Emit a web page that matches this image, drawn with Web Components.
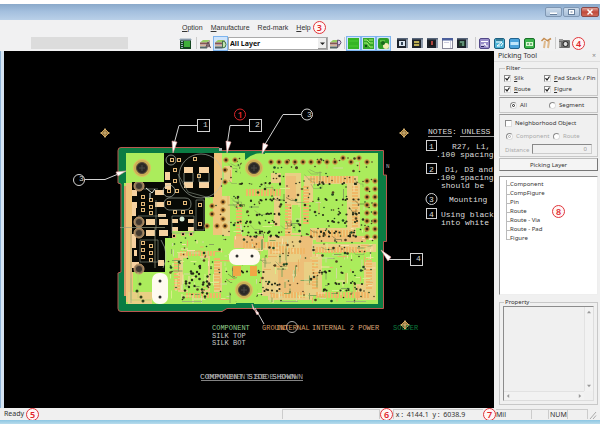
<!DOCTYPE html>
<html lang="en">
<head>
<meta charset="utf-8">
<title>PCB Viewer</title>
<style>
  html, body { height: 100%; }
  body { margin: 0; background: #fff; color: #333; font: 7px/10px "Noto Sans", "Liberation Sans", sans-serif; }
</style>
</head>
<body>
<app-window></app-window>
<script>
const define = (name, html, setup) => {
  const tpl = document.createElement('template');
  tpl.innerHTML = '<style>:host,*{box-sizing:border-box}</style>' + html;
  customElements.define(name, class extends HTMLElement {
    constructor() {
      super();
      this.attachShadow({ mode: 'open' }).append(tpl.content.cloneNode(true));
    }
    connectedCallback() { if (setup) setup(this, this.shadowRoot); }
  });
};

/* ---------- small parts ---------- */
define('num-badge', `<style>
  :host{display:inline-flex;flex:none;align-items:center;justify-content:center;width:13px;height:13px;border:1px solid #e0353a;border-radius:50%;color:#e0252b;font-size:9px;line-height:11px;font-weight:600;background:#fff6f6}
</style><slot></slot>`);

const chip = (bg, inner) => `<rect x="1" y="1" width="11" height="10" fill="#1c222b"/><rect x="10" y="1" width="2" height="10" fill="#8c98a8"/><rect x="1" y="1" width="11" height="1.5" fill="#59677c"/><rect x="3" y="4" width="6" height="5" fill="${bg}"/>${inner}`;
const tile = (a, b, inner) => `<rect x="1.5" y="1.5" width="10" height="10" rx="1.5" fill="${a}" stroke="${b}"/>${inner}`;
const stack = (extra) => `<path d="M1 5.5 4 3h7L8 5.5z" fill="#9c6"/><path d="M1 5.5h7v2H1z" fill="#855"/><path d="M1 8h7v1.300H1z" fill="#d9b79a"/><path d="M1 9.500h7v2H1z" fill="#566"/><path d="M8 5.500 11 3v6l-3 2.500z" fill="#a99"/>${extra}`;
const ICONS = {
  board: '<rect x="1" y="2" width="11" height="10" fill="#14451f"/><rect x="5" y="4" width="6" height="6" fill="#3fae3b"/><path d="M1 2h11v1H1zM2 4.500h2M2 6.500h2M2 8.500h2M2 10.500h2" fill="#567" stroke="#9ab" stroke-width="1"/>',
  layers: stack('<path d="M7 10 9 5l2.500 6M8 9h3" fill="none" stroke="#5a4650" stroke-width="1"/>'),
  layerd: stack('<path d="M8.500 4v7q3.500 0 3.500-3.500T8.500 4z" fill="#c4e6b0" stroke="#46704c"/>'),
  layerp: stack('<path d="M8.500 11V3q3.500 0 3.500 2.500T8.500 8" fill="#e0c9f0" stroke="#655672"/>'),
  green1: '<rect x="1" y="1" width="11" height="11" fill="#36b526"/><path d="M2 4h9M2 9h9" stroke="#4ccc37"/>',
  green2: '<rect x="1" y="1" width="11" height="11" fill="#36a82a"/><path d="M2 3h3l3 3h3M2 6h3l3 4h3M7 3h4" stroke="#a9ee72" fill="none"/><path d="M3 9h2" stroke="#164d16" stroke-width="2"/>',
  green3: '<rect x="1" y="1" width="11" height="11" rx="2" fill="#2f9d27"/><path d="M3 4h5" stroke="#8be35e"/><circle cx="9" cy="9" r="3" fill="#f1ecb4"/><circle cx="6" cy="6" r="2" fill="#186a1c"/>',
  win1: chip('#d9e4ee', '<rect x="5" y="5" width="2" height="3" fill="#345"/>'),
  win2: chip('#3a3a24', '<path d="M3 5h5M3 8h5" stroke="#e7d563" stroke-width="1.500"/>'),
  win3: chip('#191919', '<path d="M6 4v4" stroke="#e2554d" stroke-width="1.500"/>'),
  win4: '<rect x="1.500" y="1.500" width="10" height="10" fill="#fdfdfd" stroke="#889"/><rect x="1" y="1" width="11" height="2.500" fill="#4c5f9c"/><path d="M9.500 4v7M3 5.500h5" stroke="#ccd"/>',
  win5: chip('#23452f', '<path d="M7 4v5M4 5h2" stroke="#9fdac0" stroke-width="1"/>'),
  purple: tile('#9a8fca', '#514888', '<path d="M3 4.500h7M3 8h3l1-2 1 3h2" stroke="#fff" fill="none"/><path d="M3 9.500h3" stroke="#2a2360"/>'),
  teal: tile('#4fb4d6', '#1d5f80', '<path d="M3 5h6L4 9h3M8 9l2-3" stroke="#fff" fill="none"/><path d="M3 3h7" stroke="#18495f"/>'),
  blue: tile('#4aa3dc', '#20638f', '<rect x="2.500" y="5" width="8" height="3" fill="#bfe6fb"/>'),
  lime: tile('#3cb44c', '#19702a', '<path d="M3 5h7v4H3z" fill="#d8f7cf"/><path d="M4 7h2M7 7h2" stroke="#14702a"/>'),
  tools: '<path d="M4 11 5 4M8 11l1-7" stroke="#dfb98c" stroke-width="2"/><path d="M1.500 4 4 1.500l3 2M7 4l4-2.500" stroke="#c58c50" fill="none" stroke-width="1.500"/>',
  camera: '<rect x="1" y="3" width="11" height="8" rx="1" fill="#6d6d6d"/><rect x="1" y="2" width="4" height="2" fill="#999"/><circle cx="7.500" cy="7" r="2.500" fill="#ddd" stroke="#222"/><path d="M2 5v5" stroke="#ddd"/>'
};
define('tool-button', `<style>
  :host{display:block;flex:none;width:15px;height:15px}
  button{display:block;width:100%;height:100%;padding:0;border:1px solid transparent;background:none}
  :host([pressed]) button{border-color:#7db4ee;background:#cfe4fb}
  svg{display:block;width:13px;height:13px}
</style><button type="button"></button>`, (el, root) => {
  const b = root.querySelector('button');
  b.setAttribute('aria-label', el.getAttribute('label'));
  if (el.hasAttribute('pressed')) b.setAttribute('aria-pressed', 'true');
  b.innerHTML = `<svg viewBox="0 0 13 13">${ICONS[el.getAttribute('icon')]}</svg>`;
});

define('check-option', `<style>
  :host{display:block}
  label{display:flex;align-items:center;gap:3px;white-space:nowrap}
  input{appearance:none;flex:none;display:block;width:7px;height:7px;margin:0;background:#fff;border:1px solid #8b8b8b;border-right-color:#ddd;border-bottom-color:#ddd}
  input[type=radio]{border-radius:50%}
  span.m{position:relative;display:block;width:7px;height:7px}
  svg{position:absolute;inset:0;width:7px;height:7px;fill:none;stroke:#222;visibility:hidden}
  input:checked + svg{visibility:visible}
  :host([disabled]){color:#aaa}
  :host([disabled]) svg{stroke:#aaa}
</style><label><span class="m"><input><svg viewBox="0 0 7 7"></svg></span><span><slot></slot></span></label>`, (el, root) => {
  const i = root.querySelector('input');
  i.type = el.getAttribute('type') || 'checkbox';
  i.checked = el.hasAttribute('checked');
  i.disabled = el.hasAttribute('disabled');
  root.querySelector('svg').innerHTML = i.type === 'radio'
    ? '<circle cx="3.500" cy="3.500" r="1" stroke-width="1"/>' : '<path d="M1.500 3.200 3 5 5.500 1.500" stroke-width="1.200"/>';
});

/* ---------- window chrome ---------- */
define('title-bar', `<style>
  :host{display:flex;flex:none;justify-content:flex-end;align-items:center;gap:1px;height:16px;padding-right:1px;background:linear-gradient(#8aa9ca,#a3bfde 45%,#b9d0e8)}
  button{display:block;height:10px;width:17px;padding:0;border:1px solid #7f97b3;border-radius:2px;background:linear-gradient(#c9d9ea,#a9c0d9)}
  button.close{width:18px;border-color:#8c4a48;background:linear-gradient(#e0a297,#c1483a 50%,#cf6a58)}
  svg{display:block;width:100%;height:100%}
</style>
<button type="button" aria-label="Minimize"><svg viewBox="0 0 15 8"><path d="M4 5.500h7" stroke="#fff" stroke-width="2"/><path d="M4 6.500h7" stroke="#667f9c"/></svg></button>
<button type="button" aria-label="Maximize"><svg viewBox="0 0 15 8"><rect x="4.500" y="1.500" width="6" height="5" fill="#fff" stroke="#667f9c"/><rect x="6.500" y="3.500" width="2" height="1" fill="#667f9c"/></svg></button>
<button type="button" class="close" aria-label="Close"><svg viewBox="0 0 16 8"><path d="m5.500 1.500 5 5m0-5-5 5" stroke="#fff" stroke-width="1.500"/></svg></button>`);

define('menu-bar', `<style>
  :host{display:flex;flex:none;align-items:center;height:15px;padding-left:182px;gap:8px;font-family:"Liberation Sans",sans-serif}
  button{border:0;padding:0;background:none;font:inherit;color:inherit}
</style>
<button type="button"><u>O</u>ption</button><button type="button"><u>M</u>anufacture</button><button type="button">Red-mark</button><button type="button"><u>H</u>elp</button>`);

define('tool-bar', `<style>
  :host{display:flex;flex:none;align-items:center;height:16px;padding-left:31px;background:#f1f1f2}
  .blank{width:97px;height:12px;margin-right:50px;background:#dcdcdc}
  hr{flex:none;width:1px;height:12px;margin:0 1px;border:0;background:#ccc}
  .combo{position:relative;flex:none;width:100px;height:13px}
  select{appearance:none;display:block;width:100%;height:100%;padding:0 12px 0 1px;border:1px solid #aaa;border-radius:0;background:#fff;color:#111;font:700 7px/11px "Noto Sans",sans-serif}
  .combo svg{position:absolute;right:1px;top:1px;width:9px;height:11px;background:#eee;pointer-events:none}
  .gap{width:4px;flex:none}
  .half{width:2px;flex:none}
</style>
<div class="blank"></div>
<tool-button icon="board" label="Board"></tool-button><div class="half"></div><hr>
<tool-button icon="layers" label="Layers"></tool-button>
<tool-button icon="layerd" label="Display layer" pressed></tool-button>
<div class="combo"><select aria-label="Layer"><option>All Layer</option></select><svg viewBox="0 0 9 11"><path d="M2 4.500h5L4.500 7z" fill="#222"/><path d="M8.500 0v11M0 10.500h9" stroke="#999"/></svg></div>
<tool-button icon="layerp" label="Layer setup"></tool-button><hr>
<tool-button icon="green1" label="Copper" pressed></tool-button><tool-button icon="green2" label="Route" pressed></tool-button><tool-button icon="green3" label="Pad" pressed></tool-button><div class="gap"></div>
<tool-button icon="win1" label="Component view"></tool-button><tool-button icon="win2" label="Net view"></tool-button><tool-button icon="win3" label="Pin view"></tool-button><tool-button icon="win4" label="List"></tool-button><tool-button icon="win5" label="Layer view"></tool-button><div class="gap"></div><hr>
<tool-button icon="purple" label="Export"></tool-button><tool-button icon="teal" label="Measure"></tool-button><tool-button icon="blue" label="Panel"></tool-button><tool-button icon="lime" label="Check"></tool-button><div class="half"></div>
<tool-button icon="tools" label="Tools"></tool-button><hr>
<tool-button icon="camera" label="Capture"></tool-button><num-badge>4</num-badge>`);

/* ---------- board drawing ---------- */
function drawBoard() {
  let seed = 41;
  const rnd = () => (seed = (seed * 16807) % 2147483647) / 2147483647;
  const between = (a, b) => Math.round((a + rnd() * (b - a)) * 2) / 2;
  const rect = (x, y, w, h, f, s) => `<rect x="${x}" y="${y}" width="${w}" height="${h}" fill="${f}"${s ? ` stroke="${s}"` : ''}/>`;
  const circ = (x, y, r, f, s, w) => `<circle cx="${x}" cy="${y}" r="${r}" fill="${f}"${s ? ` stroke="${s}" stroke-width="${w || 1}"` : ''}/>`;
  const path = (d, s, w, f) => `<path d="${d}" stroke="${s}" stroke-width="${w || 1}" fill="${f || 'none'}"/>`;
  const LIME = '#abec5c', ORANGE = '#e9cf84', PEACH = '#f6d2a0', GREEN = '#0b7c43';
  const outline = 'M121 147.500H219l3 3H383.500V175h3V241.500h-3V308.500H227l-5 3H121q-3 0-3-3V273l3-1V184l-3-1V150.500q0-3 3-3z';
  let o = path(outline, '#b9584f', 1, GREEN);
  // copper area
  o += '<path d="M126 153H378V304H126V272h-2V183h2z" fill="' + LIME + '"/>';
  o += rect(126, 183, 7, 119, '#efc47a') + rect(213, 153, 9, 82, '#efc47a') + rect(124, 186, 2, 110, '#d99a6a');
  // open areas on the left
  o += '<path d="M164 153H214V197H205V231H172V238H165V272H132V182H164z" fill="#080a05"/>';
  // power islands
  [[222,196,8,40],[285,173,16,62],[304,176,54,8],[304,184,9,18],[347,183,13,45],[310,228,46,12],[244,242,44,8],
   [178,252,10,40],[200,256,10,36],[268,236,45,64],[312,244,64,8],[312,254,10,42],[356,262,20,38],[262,258,10,38],[214,262,8,30],
   [271,173,10,10],[274,196,6,30],[128,292,24,12],[224,166,8,16]].forEach(a => o += rect(...a, ORANGE));
  [[278,262,26,30],[300,236,12,26],[234,236,30,12],[316,236,50,6],[286,176,10,24]].forEach(a => o += rect(...a, '#edbf78'));
  // lime islands over them
  [[183,258,25,32],[292,205,8,28],[318,192,27,31],[322,255,28,28],[340,254,24,30],[282,206,6,18],[240,202,28,32]].forEach(a => o += rect(...a, LIME));
  // chip pad rows
  const row = (x, y, n, step, w, h, f) => { for (let i = 0; i < n; i++) o += rect(x + i * step, y, w, h, f); };
  const col = (x, y, n, step, w, h, f) => { for (let i = 0; i < n; i++) o += rect(x, y + i * step, w, h, f); };
  const C = '#f0b766', K = '#f8dfa8';
  row(246, 189, 12, 3, 2, 7, C); row(310, 176, 15, 3, 2, 7, C); row(310, 230, 15, 3, 2, 7, C);
  row(243, 242, 15, 3, 2, 6, C); row(180, 251, 12, 3, 2, 5, C); row(186, 293, 12, 3, 2, 5, C);
  row(270, 248, 12, 3, 2, 6, C); row(270, 292, 12, 3, 2, 6, C); row(316, 247, 17, 3, 2, 6, C); row(316, 292, 18, 3, 2, 6, C);
  col(236, 204, 11, 3, 6, 2, C); col(285, 204, 11, 3, 6, 2, C); col(303, 186, 13, 3, 6, 2, C); col(352, 186, 14, 3, 6, 2, C);
  col(174, 258, 11, 3, 6, 2, C); col(214, 258, 11, 3, 6, 2, C); col(312, 257, 11, 3, 6, 2, C); col(366, 257, 11, 3, 6, 2, C);
  // fine tracks
  for (let i = 0; i < 260; i++) {
    const x = between(168, 372), y = between(i % 3 ? 238 : 160, 300), l = between(2, 12);
    if (x < 216 && y < 236) continue;
    const c = [K, '#d8ee8b', '#e9b266', '#87a55c', '#d0db9d'][i % 5];
    o += path(i % 2 ? `M${x} ${y}h${Math.min(l, 376 - x)}` : `M${x} ${y}v${Math.min(l, 303 - y)}`, c, 1);
  }
  for (let i = 0; i < 36; i++) {
    const x = between(224, 356), y = between(162, 286);
    o += path(`M${x} ${y}l${between(2, 6)} ${between(2, 5)}h${between(2, 9)}v${between(-6, 6)}`, i % 3 ? '#85995c' : '#48502f', .5);
  }
  // vias
  for (let i = 0; i < 390; i++) {
    const x = between(168, 374), y = between(158, 302);
    if (x < 216 && y < 236) continue;
    o += circ(x, y, i % 4 ? .8 : 1.300, ['#30331d', '#513e20', '#1d4822'][i % 3]);
  }
  for (let r = 0; r < 9; r++) {
    const y = [184, 200, 214, 222, 232, 236, 272, 284, 290][r];
    for (let i = 0; i < 9; i++) {
      o += circ(between(238, 280), y + between(-1, 1), 1.100, '#252b18');
      o += circ(between(318, 362), y + between(-1, 1), 1.100, '#252b18');
      if (y > 236) o += circ(between(185, 212), y + between(-8, 8), 1.200, '#252b18');
    }
  }
  const bigVia = (x, y) => circ(x, y, 2.300, '#8a5c24', '#cf9c4a', 1) + circ(x, y, 1, '#261a0d');
  for (let i = 0; i < 13; i++) o += bigVia(271 + i * 8, 162 - (i === 9 || i === 11 ? 4 : 0));
  for (let y = 181; y < 238; y += 8) o += bigVia(367, y) + bigVia(375, y);
  [[226,160],[235,160],[225,170],[225,182],[223,202],[223,210],[223,219],[212,206],[212,214],[207,226],[217,226],[225,226]].forEach(a => o += bigVia(...a));
  // components in the open areas
  const pad = (x, y, w, h) => rect(x, y, w, h, PEACH);
  [[184,167,9,6],[199,167,10,6],[184,182,9,6],[199,182,10,6],[132,190,5,6],[132,202,5,6],[155,190,9,5],[155,202,9,5],[165,172,5,8],[165,183,6,6],
   [146,219,9,6],[159,219,9,6],[146,230,9,6],[159,230,9,6],[172,219,6,4],[172,227,6,4],[188,219,6,4],[188,227,6,4],[132,262,7,6],[158,260,6,6],[158,214,8,3],[134,250,3,6]].forEach(a => o += pad(...a));
  o += pad(132, 208, 4, 8) + pad(132, 234, 4, 14);
  const sq = (x, y) => rect(x - 1.500, y - 1.500, 3, 3, '#14120c', '#e3b978');
  for (const x of [143, 151]) for (const y of [197, 204, 210, 243, 250, 257]) o += sq(x, y + (x === 151 ? 3 : 0));
  [[172,160],[179,160],[175,170],[175,181],[169,191],[177,191],[169,203],[185,203],[175,212],[183,212],[191,212],[200,205],[200,224],[174,236],[183,234],[191,234],[151,246],[199,176],[195,159]].forEach(a => o += sq(...a));
  const silk = '#b9c3b6';
  o += circ(171, 160, 5, 'none', silk, .7) + circ(169, 191, 6, 'none', silk, .7) + circ(201, 176, 22, 'none', silk, .6);
  o += path('M184 173v9h9v-9M199 173v9h10v-9M169 198h16q6 0 6 6t-6 6h-16q-5-1-5-6t5-6z', silk, .6);
  o += path('M172 216h22v17h-22zM138 189h20M138 216h28M156 200v30M196 200v30h8v-30zM140 240h18v22h-18zM178 174l10 18 22 6', '#8d988a', .6);
  o += circ(182, 219, 2.500, '#d8ecd8') + path('M146 188l6 5 3-4M150 193v6', '#dfe8df', 1) + path('M161 240q9 14 2 28', silk, .6);
  [[139,186],[139,222],[139,233],[139,269]].forEach(([x, y]) => o += circ(x, y, 5, '#8b7658', '#c79a68', 1) + circ(x, y, 3, '#40382f'));
  // mounting holes
  o += rect(126, 153, 38, 29, LIME) + circ(254, 170, 14, LIME) + circ(244, 290, 14, LIME) + '<path d="M245 151h20v3q-10-3-20 6z" fill="#0b7c43"/><path d="M236 303h18v4h-18z" fill="#0b7c43"/>';
  [[142, 168], [254, 168], [244, 290]].forEach(([x, y]) => o += circ(x, y, 8.500, '#c8ae55', '#e0c060', 1) + circ(x, y, 5.500, '#2a2926', '#5a4b3a', 1) + path(`M${x - 3} ${y}h6m-3-3v6`, '#4b4a47'));
  // slotted pads
  o += rect(233, 266, 8, 10, '#f0a746') + rect(250, 266, 7, 10, '#f0a746');
  o += '<rect x="152" y="273" width="16" height="31" rx="7" fill="#fffaf0"/><rect x="229" y="249" width="31" height="16" rx="7" fill="#fffaf0"/>';
  o += [[160,281],[160,297],[237,256],[252,256]].map(a => circ(...a, 1.500, '#2c2c2c')).join('');
  o += path('M131 278v22h20M138 272v26', '#b8d070', .8) + [[140,284],[141,297],[143,301],[137,291]].map(a => circ(...a, 1.500, '#30401a')).join('');
  o += path('M120 227.500H165M155 228v40M182 301.500h20M280 301.500h18M346 301.500h20M131 303V230', '#9a9e83', .7);
  // callouts
  const wht = '#d2d2d2';
  o += path('M197 125.500H179L174 144M249 125.500H230l-3 20M301 114.500H283L264 146M85 179.500h20l12-5M410 259.500H388M264 324 255 308', wht, 1);
  const arrow = d => `<path d="${d}" fill="#fff" stroke="#e9a3a0" stroke-width=".6"/>`;
  o += arrow('M172 141l5 1-4 11z') + arrow('M226 141l5 1-4 11z') + arrow('M263 143l5 2-6 9z') + arrow('M116 172l2 4 8-5z') + arrow('M391 257l-3 4-7-11z') + arrow('M253 309l6 4-2 2-5-11z');
  o += rect(197.5, 119.500, 12, 12, 'none', wht) + rect(249.5, 119.500, 12, 12, 'none', wht) + rect(410.5, 253.500, 12, 12, 'none', wht);
  o += circ(79, 180, 5.500, 'none', wht) + circ(307, 114.500, 5.500, 'none', wht) + circ(292, 327, 5.500, 'none', '#aaa');
  const mono = (x, y, t, f, size) => `<text x="${x}" y="${y}" fill="${f || '#ddd'}" font-size="${size || 7}">${t}</text>`;
  o += mono(203, 127, '1', wht, 8) + mono(255, 127, '2', wht, 8) + mono(307, 117, '3', wht, 8) + mono(79, 181, '3', wht, 8) + mono(416, 261, '4', wht, 8);
  // fiducials
  [[105, 133], [404, 133], [405, 325]].forEach(([x, y]) => o += path(`M${x} ${y - 4}l4 4-4 4-4-4z`, '#d0a458', 1, '#8b6b36') + path(`M${x - 5} ${y}h10m-5-5v10`, '#e7c98a', .7));
  // layer names
  o += mono(212, 330, 'COMPONENT', '#92d18c') + mono(212, 338, 'SILK TOP', '#c9c9c9') + mono(212, 345, 'SILK BOT', '#c9c9c9');
  o += mono(262, 330, 'GROUND', '#d39a63') + mono(276, 330, 'INTERNAL', '#d39a63') + mono(312, 330, 'INTERNAL 2 POWER', '#d9a577') + mono(393, 330, 'SOLDER', '#0d7a3d');
  o += mono(200, 379, 'COMPONENT SIDE SHOWN', '#cfcfcf', 8) + mono(207, 379, 'COMPONENT SIDE SHOWN', '#9a9a9a', 8) + path('M201 380.500H303', '#bbb', .7);
  // notes
  o += mono(428, 134, 'NOTES: UNLESS', '#ddd', 8) + path('M428 136.500h24M460 136.500h34', '#bbb', .8);
  const note = (y, n, lines, round) => {
    o += round ? circ(431.5, y - 3, 5.500, 'none', wht) : rect(426.5, y - 8.500, 10, 10, 'none', wht);
    o += mono(429, y, n, '#ddd', 8);
    lines.forEach((l, i) => o += mono(l[1], y + i * 8, l[0], '#ddd', 8));
  };
  note(149, '1', [['R27, L1,', 452], ['.100 spacing', 436]]);
  note(172, '2', [['D1, D3 and', 445], ['.100 spacing', 436], ['should be', 441]]);
  note(202, '3', [['Mounting', 449]], true);
  note(217, '4', [['Using black', 441], ['into white', 441]]);
  o += `<text x="386" y="168" fill="#aaa" font-size="6">N</text><path d="M219 148h3v3h-3z" fill="#aaa"/>`;
  o += circ(240, 114.500, 5.500, 'none', '#d8242a') + '<text x="240" y="118" text-anchor="middle" fill="#e0252b" font-size="9" font-weight="600" font-family="Noto Sans, sans-serif">1</text>';
  return o;
}
define('board-canvas', `<style>
  :host{display:block;flex:1;min-width:0;background:#000;overflow:hidden}
  svg{display:block;width:100%;height:100%;font-family:"Liberation Mono",monospace}
</style><svg viewBox="4 51 490 357" preserveAspectRatio="xMinYMin meet" role="img" aria-label="Circuit board"></svg>`,
  (el, root) => { root.querySelector('svg').innerHTML = drawBoard(); });

/* ---------- side panel ---------- */
define('tree-list', `<style>
  :host{position:relative;display:block;height:119px;padding:3px 0 0 6px;background:#fff;border:1px solid #8a8a8a;border-right-color:#eee;border-bottom-color:#eee}
  ul{list-style:none;margin:0;padding:0}
  li{position:relative;height:9px;padding-left:4px;line-height:9px;font-size:6px}
  li::before{content:"";position:absolute;left:0;top:0;width:3px;height:5px;border:solid #bbb;border-width:0 0 1px 1px}
  li:not(:last-child)::after{content:"";position:absolute;left:0;top:0;height:9px;border-left:1px solid #bbb}
  num-badge{position:absolute;left:52px;top:28px}
</style>
<ul><li>Component</li><li>CompFigure</li><li>Pin</li><li>Route</li><li>Route - Via</li><li>Route - Pad</li><li>Figure</li></ul><num-badge>8</num-badge>`);

define('picking-panel', `<style>
  :host{display:flex;flex:none;flex-direction:column;width:106px;background:#f0f0f0;font-size:6px;line-height:8px}
  header{display:flex;flex:none;justify-content:space-between;align-items:center;height:11px;padding:0 4px;border-bottom:1px solid #ddd;font-size:7px}
  header button{border:0;padding:0;background:none;font:inherit;color:#888}
  main{display:flex;flex:1;flex-direction:column;padding:2px 2px 3px 5px}
  fieldset{min-width:0;margin:0;padding:0 4px;border:1px solid #c8c8c8}
  legend{padding:0 1px;margin-left:1px}
  .f{height:32px;padding:2px 0 0 4px}
  .grid{display:grid;grid-template-columns:40px 1fr;row-gap:3px}
  .box{border:1px solid #c8c8c8;border-top-color:#999;padding:0 5px;margin-top:1px}
  .r{display:grid;grid-template-columns:39px 1fr;height:16px;align-items:center;padding-left:10px}
  .n{display:flex;flex-direction:column;gap:5px;height:43px;padding-top:4px}
  .n .two{display:grid;grid-template-columns:47px 1fr;padding-left:1px}
  .dist{display:flex;gap:3px;align-items:center;color:#aaa}
  .dist input{flex:1;min-width:0;height:10px;margin:-1px 0 0;padding:0 4px;border:1px solid #ccc;border-top-color:#888;border-left-color:#888;background:#f0f0f0;text-align:right;font:inherit;color:#999}
  .pick{flex:none;height:13px;margin:1px 0 5px;padding:0;border:1px solid #bbb;border-right-color:#777;border-bottom-color:#777;background:#f4f4f4;font:inherit;color:inherit}
  .p{flex:1;margin-top:3px;padding:0 3px 3px;display:flex;font-size:6px}
  .view{flex:1;display:grid;grid-template:1fr 9px/1fr 9px;border:1px solid #8c8c8c;border-right-color:#ddd;border-bottom-color:#ddd}
  .sb{display:flex;justify-content:space-between;align-items:center;padding:3px 2px;background:#f2f2f2}
  .v{flex-direction:column}.h{border-top:1px solid #e2e2e2}.v{border-left:1px solid #e2e2e2}
  svg{display:block;width:4px;height:4px;fill:#999}
</style>
<header><span>Picking Tool</span><button type="button" aria-label="Close panel">×</button></header>
<main>
  <fieldset class="f"><legend>Filter</legend><div class="grid">
    <check-option checked><u>S</u>ilk</check-option><check-option checked><u>P</u>ad Stack / Pin</check-option>
    <check-option checked><u>R</u>oute</check-option><check-option checked><u>F</u>igure</check-option></div></fieldset>
  <div class="box r"><check-option type="radio" checked>All</check-option><check-option type="radio">Segment</check-option></div>
  <div class="box n"><check-option>Neighborhood Object</check-option>
    <div class="two"><check-option type="radio" checked disabled>Component</check-option><check-option type="radio" disabled>Route</check-option></div>
    <label class="dist">Distance<input value="0" disabled></label></div>
  <button type="button" class="pick">Picking Layer</button>
  <tree-list></tree-list>
  <fieldset class="p"><legend>Property</legend><div class="view"><div></div>
    <div class="sb v"><svg viewBox="0 0 5 5"><path d="M0 4h5L2.500 1z"/></svg><svg viewBox="0 0 5 5"><path d="M0 1h5L2.500 4z"/></svg></div>
    <div class="sb h"><svg viewBox="0 0 5 5"><path d="M4 0v5L1 2.500z"/></svg><svg viewBox="0 0 5 5"><path d="M1 0v5l3-2.500z"/></svg></div><div></div></div></fieldset>
</main>`);

define('status-bar', `<style>
  :host{display:flex;flex:none;align-items:center;height:12px;padding-left:4px;background:#f0f0f0}
  .ready{display:flex;flex:1;align-items:center;gap:2px}
  .c{flex:none;height:10px;line-height:9px;border:1px solid #ccc;border-width:1px 1px 0 1px;white-space:pre}
  .c.a{width:98px}.c.x{width:90px;border-right:0}.c.m{width:36px;border-left:0}
  .c.g{width:17px;border-left:0}.c.k{width:19px;border-left:0;padding-left:1px}.c.e{width:20px;border-left:0}
  svg{width:9px;height:11px;flex:none}
</style>
<div class="ready"><span>Ready</span><num-badge>5</num-badge></div>
<div class="c a"></div><num-badge>6</num-badge><div class="c x"> x :  4144.1  y :  6038.9</div><num-badge>7</num-badge><div class="c m">Mil</div><div class="c g"></div><div class="c k">NUM</div><div class="c e"></div>
<svg viewBox="0 0 9 11"><path d="m2 10 6-7M5 10l3-3.500" stroke="#aaa"/></svg>`);

define('app-window', `<style>
  :host{display:flex;flex-direction:column;min-height:100vh;padding-top:4px;background:#fff}
  .menu{display:flex;align-items:center;gap:2px;height:15px;background:#f1f1f2}
  .body{display:flex;flex:1;min-height:0;padding-left:4px;background:linear-gradient(90deg,#8fb4d6 1px,#d5e4f2 1px)}
  status-bar{padding-right:3px}
  footer{flex:none;height:4px;background:linear-gradient(#8cc6e2,#b8dcec)}
</style>
<title-bar></title-bar><div class="menu"><menu-bar></menu-bar><num-badge>3</num-badge></div><tool-bar></tool-bar>
<div class="body"><board-canvas></board-canvas><picking-panel></picking-panel></div>
<status-bar></status-bar><footer></footer>`);
</script>
</body>
</html>
